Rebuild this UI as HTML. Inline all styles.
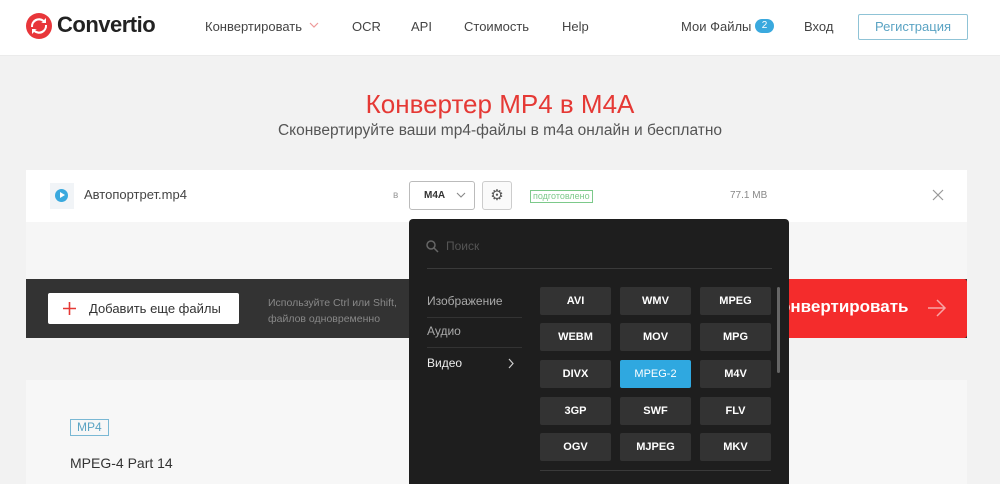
<!DOCTYPE html>
<html><head><meta charset="utf-8"><style>
*{margin:0;padding:0;box-sizing:border-box}
body{width:1000px;height:484px;overflow:hidden;background:#f2f2f2;font-family:"Liberation Sans","DejaVu Sans",sans-serif;position:relative}
.a{position:absolute}
.hdr{left:0;top:0;width:1000px;height:56px;background:#fff;border-bottom:1px solid #ebebeb}
.nav{font-size:13px;color:#444;top:19px}
.btn{background:#333;color:#fff;font-size:11px;font-weight:bold;text-align:center;line-height:28px;width:71px;height:28px;border-radius:2px}
</style></head><body>
<div class="a hdr"></div>
<svg class="a" style="left:26px;top:13px" width="26" height="26" viewBox="0 0 26 26"><circle cx="13" cy="13" r="13" fill="#e8363a"/><path d="M7 14a6 6 0 0 1 10-5l-2 1h5V5l-2 2A8 8 0 0 0 5 14z M19 12a6 6 0 0 1-10 5l2-1H6v5l2-2a8 8 0 0 0 13-7z" fill="#fff"/></svg>
<div class="a" style="left:57px;top:12px;font-size:22px;font-weight:bold;color:#222;letter-spacing:-0.5px">Convertio</div>
<div class="a nav" style="left:205px">Конвертировать</div>
<svg class="a" style="left:309px;top:22px" width="10" height="7"><path d="M1 1l4 4 4-4" stroke="#e99" fill="none" stroke-width="1.2"/></svg>
<div class="a nav" style="left:352px">OCR</div>
<div class="a nav" style="left:411px">API</div>
<div class="a nav" style="left:464px">Стоимость</div>
<div class="a nav" style="left:562px">Help</div>
<div class="a nav" style="left:681px">Мои Файлы</div>
<div class="a" style="left:755px;top:19px;width:19px;height:14px;border-radius:7px;background:#3aa9de;color:#fff;font-size:10px;text-align:center;line-height:14px">2</div>
<div class="a nav" style="left:804px">Вход</div>
<div class="a" style="left:858px;top:14px;width:110px;height:26px;border:1px solid #8fc3d6;border-radius:2px;color:#5aa3c3;font-size:13px;text-align:center;line-height:24px">Регистрация</div>
<div class="a" style="left:0;width:1000px;top:89px;text-align:center;font-size:26px;color:#e53935">Конвертер MP4 в M4A</div>
<div class="a" style="left:0;width:1000px;top:122px;text-align:center;font-size:15.5px;color:#555">Сконвертируйте ваши mp4-файлы в m4a онлайн и бесплатно</div>
<div class="a" style="left:26px;top:170px;width:941px;height:52px;background:#fff"></div>
<div class="a" style="left:26px;top:222px;width:941px;height:57px;background:#f6f6f6"></div>
<div class="a" style="left:50px;top:183px;width:24px;height:26px;background:#f1f4f7"></div>
<div class="a" style="left:55px;top:189px;width:13px;height:13px;border-radius:50%;background:#3aa9de"></div>
<div class="a" style="left:60px;top:192px;width:0;height:0;border-left:5px solid #fff;border-top:3.5px solid transparent;border-bottom:3.5px solid transparent"></div>
<div class="a" style="left:84px;top:187px;font-size:13px;color:#444">Автопортрет.mp4</div>
<div class="a" style="left:393px;top:190px;font-size:10px;color:#999">в</div>
<div class="a" style="left:409px;top:181px;width:66px;height:29px;border:1px solid #bbb;border-radius:3px;background:#fff;font-size:10px;font-weight:bold;color:#333;line-height:27px;padding-left:14px">M4A</div>
<svg class="a" style="left:456px;top:192px" width="10" height="7"><path d="M1 1l4 4 4-4" stroke="#888" fill="none" stroke-width="1.1"/></svg>
<div class="a" style="left:482px;top:181px;width:30px;height:29px;border:1px solid #ccc;border-radius:3px;background:#fafafa;text-align:center;line-height:27px;font-size:15px;color:#555">&#9881;</div>
<div class="a" style="left:530px;top:190px;border:1px solid #7cc98a;color:#7cc98a;font-size:9px;padding:0 2px;line-height:11px">подготовлено</div>
<div class="a" style="left:730px;top:190px;font-size:10px;color:#888">77.1 MB</div>
<svg class="a" style="left:932px;top:189px" width="12" height="12"><path d="M1 1l10 10M11 1L1 11" stroke="#999" stroke-width="1.2"/></svg>
<div class="a" style="left:26px;top:279px;width:941px;height:59px;background:#333"></div>
<div class="a" style="left:770px;top:279px;width:197px;height:59px;background:#f42c2c;border-radius:0 3px 3px 0"></div>
<div class="a" style="left:780px;top:297px;font-size:17px;font-weight:bold;color:#fff">онвертировать</div>
<svg class="a" style="left:927px;top:299px" width="20" height="18"><path d="M1 9h17M10 1l8 8-8 8" stroke="#f8a5a5" fill="none" stroke-width="1.5"/></svg>
<div class="a" style="left:48px;top:293px;width:191px;height:31px;background:#fff;border-radius:2px"></div>
<svg class="a" style="left:63px;top:302px" width="13" height="13"><path d="M6.5 0v13M0 6.5h13" stroke="#e53935" stroke-width="1.6"/></svg>
<div class="a" style="left:89px;top:301px;font-size:13px;color:#333">Добавить еще файлы</div>
<div class="a" style="left:268px;top:295px;font-size:10.5px;color:#888;line-height:16px">Используйте Ctrl или Shift,<br>файлов одновременно</div>
<div class="a" style="left:26px;top:380px;width:941px;height:104px;background:#f7f7f7"></div>
<div class="a" style="left:70px;top:419px;border:1px solid #7ab8d4;color:#5aa3c3;font-size:12px;padding:0 6px;line-height:15px">MP4</div>
<div class="a" style="left:70px;top:455px;font-size:14px;color:#333">MPEG-4 Part 14</div>
<div class="a" style="left:409px;top:219px;width:380px;height:265px;background:#1e1e1e;border-radius:4px 4px 0 0"></div>
<svg class="a" style="left:426px;top:240px" width="13" height="13"><circle cx="5" cy="5" r="4" stroke="#666" fill="none" stroke-width="1.5"/><path d="M8 8l4 4" stroke="#666" stroke-width="1.5"/></svg>
<div class="a" style="left:446px;top:239px;font-size:12px;color:#555">Поиск</div>
<div class="a" style="left:427px;top:268px;width:345px;height:1px;background:#3a3a3a"></div>
<div class="a" style="left:427px;top:294px;font-size:12px;color:#aaa">Изображение</div>
<div class="a" style="left:427px;top:317px;width:95px;height:1px;background:#333"></div>
<div class="a" style="left:427px;top:324px;font-size:12px;color:#aaa">Аудио</div>
<div class="a" style="left:427px;top:347px;width:95px;height:1px;background:#333"></div>
<div class="a" style="left:427px;top:356px;font-size:12px;color:#eee">Видео</div>
<svg class="a" style="left:508px;top:358px" width="7" height="11"><path d="M1 1l4 4.5L1 10" stroke="#ccc" fill="none" stroke-width="1.2"/></svg>
<div class="a btn" style="left:540px;top:287px">AVI</div>
<div class="a btn" style="left:620px;top:287px">WMV</div>
<div class="a btn" style="left:700px;top:287px">MPEG</div>
<div class="a btn" style="left:540px;top:323px">WEBM</div>
<div class="a btn" style="left:620px;top:323px">MOV</div>
<div class="a btn" style="left:700px;top:323px">MPG</div>
<div class="a btn" style="left:540px;top:360px">DIVX</div>
<div class="a btn" style="left:620px;top:360px;background:#2fa8e0;font-weight:normal">MPEG-2</div>
<div class="a btn" style="left:700px;top:360px">M4V</div>
<div class="a btn" style="left:540px;top:397px">3GP</div>
<div class="a btn" style="left:620px;top:397px">SWF</div>
<div class="a btn" style="left:700px;top:397px">FLV</div>
<div class="a btn" style="left:540px;top:433px">OGV</div>
<div class="a btn" style="left:620px;top:433px">MJPEG</div>
<div class="a btn" style="left:700px;top:433px">MKV</div>
<div class="a" style="left:540px;top:470px;width:231px;height:1px;background:#3a3a3a"></div>
<div class="a" style="left:777px;top:287px;width:3px;height:86px;background:#666;border-radius:2px"></div>
</body></html>
